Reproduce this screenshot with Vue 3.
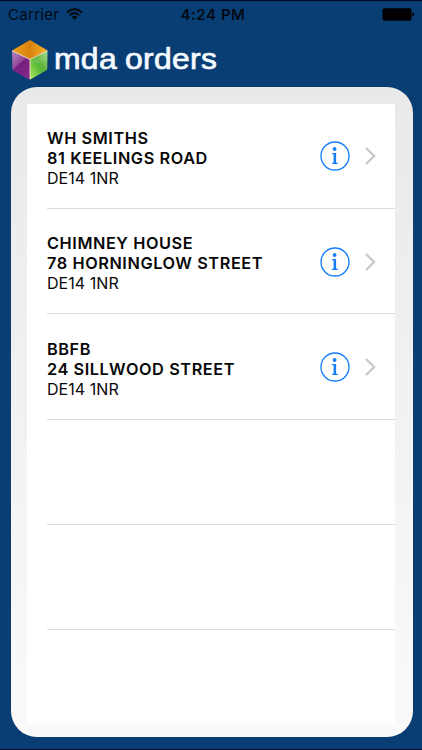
<script setup>
const orders = [
  { name: 'WH SMITHS', street: '81 KEELINGS ROAD', postcode: 'DE14 1NR' },
  { name: 'CHIMNEY HOUSE', street: '78 HORNINGLOW STREET', postcode: 'DE14 1NR' },
  { name: 'BBFB', street: '24 SILLWOOD STREET', postcode: 'DE14 1NR' },
]
const emptyRows = 3
</script>

<template>
  <div class="screen">
    <div class="status">
      <div class="carrier">
        <span>Carrier</span>
        <svg class="wifi" viewBox="0 0 17 12" width="17" height="12">
          <path d="M1 4.4Q8.5-2.2 16 4.4" fill="none" stroke="#020a14" stroke-width="2" />
          <path d="M3.7 7.2Q8.5 3 13.3 7.2" fill="none" stroke="#020a14" stroke-width="2" />
          <path d="M5.7 9Q8.5 6.6 11.3 9L8.5 11.9Z" fill="#020a14" />
        </svg>
      </div>
      <span class="time">4:24 PM</span>
      <svg class="battery" viewBox="0 0 33 13" width="33" height="13">
        <rect x="0.5" y="0.3" width="29" height="12.4" rx="2" fill="#000" />
        <path d="M30.5 4.3Q32.3 4.7 32.3 6.5T30.5 8.7Z" fill="#000" />
      </svg>
    </div>

    <header class="brand">
      <svg class="cube" viewBox="0 0 38 42" width="38" height="42">
        <defs>
          <linearGradient id="top" x1="0" y1="0" x2="1" y2="0">
            <stop offset="0" stop-color="#f0a21c" />
            <stop offset=".5" stop-color="#d9820c" />
            <stop offset="1" stop-color="#ffb52c" />
          </linearGradient>
          <linearGradient id="left" x1="0" y1="0" x2=".6" y2="1">
            <stop offset="0" stop-color="#b58ab9" />
            <stop offset=".48" stop-color="#964a9c" />
            <stop offset=".55" stop-color="#792080" />
            <stop offset="1" stop-color="#8c2a90" />
          </linearGradient>
          <linearGradient id="right" x1="1" y1="0" x2=".2" y2="1">
            <stop offset="0" stop-color="#b5df9a" />
            <stop offset=".45" stop-color="#62b53d" />
            <stop offset=".6" stop-color="#58b936" />
            <stop offset="1" stop-color="#a6e05a" />
          </linearGradient>
        </defs>
        <path d="M19 1L36.5 11.5L19 20.5L1 11.5Z" fill="url(#top)" />
        <path d="M1 11.5L19 20.5V40.8L1.4 31Z" fill="url(#left)" />
        <path d="M36.5 11.5L19 20.5V40.8L36.2 30.8Z" fill="url(#right)" />
        <path d="M1.3 11.8L19 20.5L36.2 11.8M19 20.5V40" fill="none" stroke="#e6dfc4" stroke-width="1" />
        <path d="M3 29Q12 21 18 24L18.4 39.5Z" fill="#6c1b78" opacity=".3" />
        <path d="M20 24Q29 26 35.7 20V14L20 22Z" fill="#8fd07a" opacity=".3" />
      </svg>
      <span class="title">mda orders</span>
    </header>

    <main class="panel">
      <ul class="list">
        <li v-for="order in orders" :key="order.name" class="row">
          <div class="address">
            <div class="strong">{{ order.name }}</div>
            <div class="strong">{{ order.street }}</div>
            <div class="postcode">{{ order.postcode }}</div>
          </div>
          <svg class="info" viewBox="0 0 30 30" width="30" height="30">
            <circle cx="15" cy="15" r="14" fill="none" stroke="#147efb" stroke-width="1.35" />
            <circle cx="14.6" cy="8" r="1.9" fill="#147efb" />
            <path d="M12.1 12.1H16.1V21.8H17.8V22.9H12V21.8H13.6V13.3H12.1Z" fill="#147efb" />
          </svg>
          <svg class="chevron" viewBox="0 0 12 18" width="12" height="18">
            <path d="M1 1L9.1 9L1 17" fill="none" stroke="#c7c7cc" stroke-width="2.3" />
          </svg>
        </li>
        <li v-for="n in emptyRows" :key="n" class="row"></li>
      </ul>
    </main>
  </div>
</template>

<style>
body {
  margin: 0;
  background: #083e74;
}
</style>

<style scoped>
.screen {
  box-sizing: border-box;
  width: 422px;
  height: 750px;
  overflow: hidden;
  background: #083e74;
  border-top: 1px solid #020824;
  border-bottom: 1px solid #020824;
  font-family: Inter, "Liberation Sans", sans-serif;
}
.status {
  display: grid;
  grid-template-columns: 1fr auto 1fr;
  align-items: center;
  height: 27px;
  padding: 0 8px 0 8px;
  color: #020a14;
  font-size: 15px;
}
.carrier {
  display: flex;
  align-items: center;
  gap: 7px;
  letter-spacing: 0.3px;
}
.wifi {
  margin-top: -2px;
}
.time {
  margin-left: 4px;
  font-weight: 600;
  letter-spacing: 0.55px;
}
.battery {
  justify-self: end;
  margin-right: -1px;
}
.brand {
  display: flex;
  align-items: center;
  height: 58.5px;
  padding-left: 11px;
}
.cube {
  margin-top: 5px;
}
.title {
  margin: 4px 0 0 5px;
  color: #f5faff;
  font-family: "Liberation Sans", sans-serif;
  font-size: 29.5px;
  line-height: 34px;
  letter-spacing: 0.3px;
  word-spacing: -1px;
  transform: scaleX(1.08);
  transform-origin: left;
  -webkit-text-stroke: 0.7px #f5faff;
}
.panel {
  box-sizing: border-box;
  width: 402px;
  height: 650.5px;
  margin-left: 11px;
  padding: 17px 18px 14px 16px;
  border-radius: 26px;
  background: linear-gradient(#e9e9e9, #fafafa);
}
.list {
  height: 619.5px;
  margin: 0;
  padding: 0;
  overflow: hidden;
  background: #fff;
  list-style: none;
}
.row {
  position: relative;
  box-sizing: border-box;
  display: flex;
  align-items: center;
  height: 105.4px;
  padding: 0 18px 0 20px;
}
.row:not(:last-child)::after {
  content: "";
  position: absolute;
  right: 0;
  bottom: 0;
  left: 20px;
  height: 1px;
  background: #dcdcde;
}
.address {
  flex: 1;
  margin-top: 3.6px;
  color: #080808;
  font-size: 16.3px;
  line-height: 20px;
}
.strong {
  font-weight: 600;
  letter-spacing: 0.58px;
}
.postcode {
  font-size: 16px;
  letter-spacing: 0.05px;
}
.info {
  margin-right: 15px;
}
</style>
